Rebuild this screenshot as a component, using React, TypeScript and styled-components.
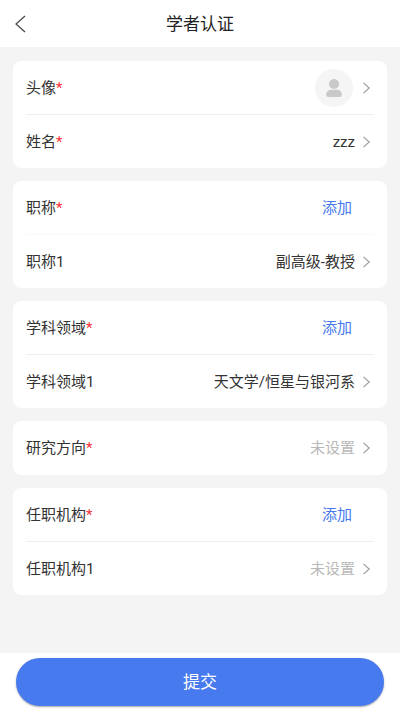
import React from "react";
import styled, { createGlobalStyle } from "styled-components";

const GlobalStyle = createGlobalStyle`
  *, *::before, *::after { box-sizing: border-box; }
  body {
    margin: 0;
    background: #f4f4f4;
    color: #333;
    font-family: Roboto, "Noto Sans CJK SC", sans-serif;
    font-size: 15px;
    line-height: 22px;
  }
  button {
    margin: 0;
    padding: 0;
    border: 0;
    background: none;
    color: inherit;
    font: inherit;
    cursor: pointer;
  }
`;

const Page = styled.div`
  display: flex;
  flex-direction: column;
  min-height: 100vh;
`;

const Header = styled.header`
  display: grid;
  grid-template-columns: 40px 1fr 40px;
  align-items: center;
  height: 47px;
  background: #fff;
`;

const BackButton = styled.button`
  display: flex;
  align-items: center;
  height: 47px;
  padding-left: 15px;
`;

const Title = styled.h1`
  margin: 0;
  color: #222;
  font-size: 17px;
  font-weight: 400;
  line-height: 24px;
  text-align: center;
`;

const Content = styled.main`
  display: flex;
  flex: 1;
  flex-direction: column;
  gap: 13px;
  padding: 14px 13px;
`;

const Card = styled.section`
  display: flex;
  flex-direction: column;
  justify-content: center;
  min-height: 54px;
  padding: 0 13px;
  border-radius: 8px;
  background: #fff;
`;

const Divider = styled.hr<{ $faint?: boolean }>`
  width: 100%;
  height: 1px;
  margin: 0;
  border: 0;
  background: ${({ $faint }) => ($faint ? "#f9f9f9" : "#eeeeee")};
`;

const Row = styled.div`
  display: flex;
  align-items: center;
  justify-content: space-between;
  width: 100%;
  height: 53px;
`;

const LinkRow = styled(Row).attrs({ as: "button", type: "button" })`
  padding-right: 3px;
  text-align: left;
`;

const Required = styled.span`
  color: #fb3038;
`;

const Value = styled.span<{ $empty?: boolean }>`
  display: flex;
  align-items: center;
  gap: 7px;
  color: ${({ $empty }) => ($empty ? "#b9b9b9" : "inherit")};
`;

const AddButton = styled.button`
  height: 100%;
  padding: 0 22px;
  color: #4678ee;
`;

const Avatar = styled.span`
  display: flex;
  align-items: center;
  justify-content: center;
  width: 38px;
  height: 38px;
  margin-right: 2px;
  border-radius: 50%;
  background: #f5f5f5;
`;

const Footer = styled.footer`
  padding: 5px 16px 6px;
  background: #fff;
`;

const SubmitButton = styled.button`
  width: 100%;
  height: 48px;
  border-radius: 24px;
  background: #4779ef;
  box-shadow: 0 1px 2px rgba(0, 0, 0, 0.35);
  color: #fff;
  font-size: 17px;
  line-height: 24px;
`;

function Chevron() {
  return (
    <svg width="9" height="12" viewBox="0 0 9 12" fill="none" stroke="#999" strokeWidth="1.1" aria-hidden="true">
      <path d="M1.5 0.8 L7.2 6 L1.5 11.2" />
    </svg>
  );
}

function BackIcon() {
  return (
    <svg width="11" height="18" viewBox="0 0 11 18" fill="none" stroke="#444" strokeWidth="1.2" aria-hidden="true">
      <path d="M10 1 L1 9 L10 17" />
    </svg>
  );
}

function PersonIcon() {
  return (
    <svg width="16" height="18" viewBox="0 0 16 18" fill="#c9c9c9" aria-hidden="true">
      <circle cx="8" cy="5" r="5" />
      <path d="M5 10.8 H11 C14 10.8 15.8 13.2 15.8 15.8 C15.8 17.2 15 18 13.7 18 H2.3 C1 18 0.2 17.2 0.2 15.8 C0.2 13.2 2 10.8 5 10.8 Z" />
    </svg>
  );
}

type FieldProps = {
  label: string;
  required?: boolean;
  empty?: boolean;
  children: React.ReactNode;
};

function Field({ label, required, empty, children }: FieldProps) {
  return (
    <LinkRow>
      <span>
        {label}
        {required && <Required>*</Required>}
      </span>
      <Value $empty={empty}>
        {children}
        <Chevron />
      </Value>
    </LinkRow>
  );
}

function AddHeading({ label }: { label: string }) {
  return (
    <Row>
      <span>
        {label}
        <Required>*</Required>
      </span>
      <AddButton type="button" aria-label={`添加${label}`}>添加</AddButton>
    </Row>
  );
}

export default function App() {
  return (
    <>
      <GlobalStyle />
      <Page>
        <Header>
          <BackButton type="button" aria-label="返回">
            <BackIcon />
          </BackButton>
          <Title>学者认证</Title>
        </Header>
        <Content>
          <Card>
            <Field label="头像" required>
              <Avatar>
                <PersonIcon />
              </Avatar>
            </Field>
            <Divider />
            <Field label="姓名" required>zzz</Field>
          </Card>
          <Card>
            <AddHeading label="职称" />
            <Divider $faint />
            <Field label="职称1">副高级-教授</Field>
          </Card>
          <Card>
            <AddHeading label="学科领域" />
            <Divider />
            <Field label="学科领域1">天文学/恒星与银河系</Field>
          </Card>
          <Card>
            <Field label="研究方向" required empty>未设置</Field>
          </Card>
          <Card>
            <AddHeading label="任职机构" />
            <Divider />
            <Field label="任职机构1" empty>未设置</Field>
          </Card>
        </Content>
        <Footer>
          <SubmitButton type="button">提交</SubmitButton>
        </Footer>
      </Page>
    </>
  );
}
